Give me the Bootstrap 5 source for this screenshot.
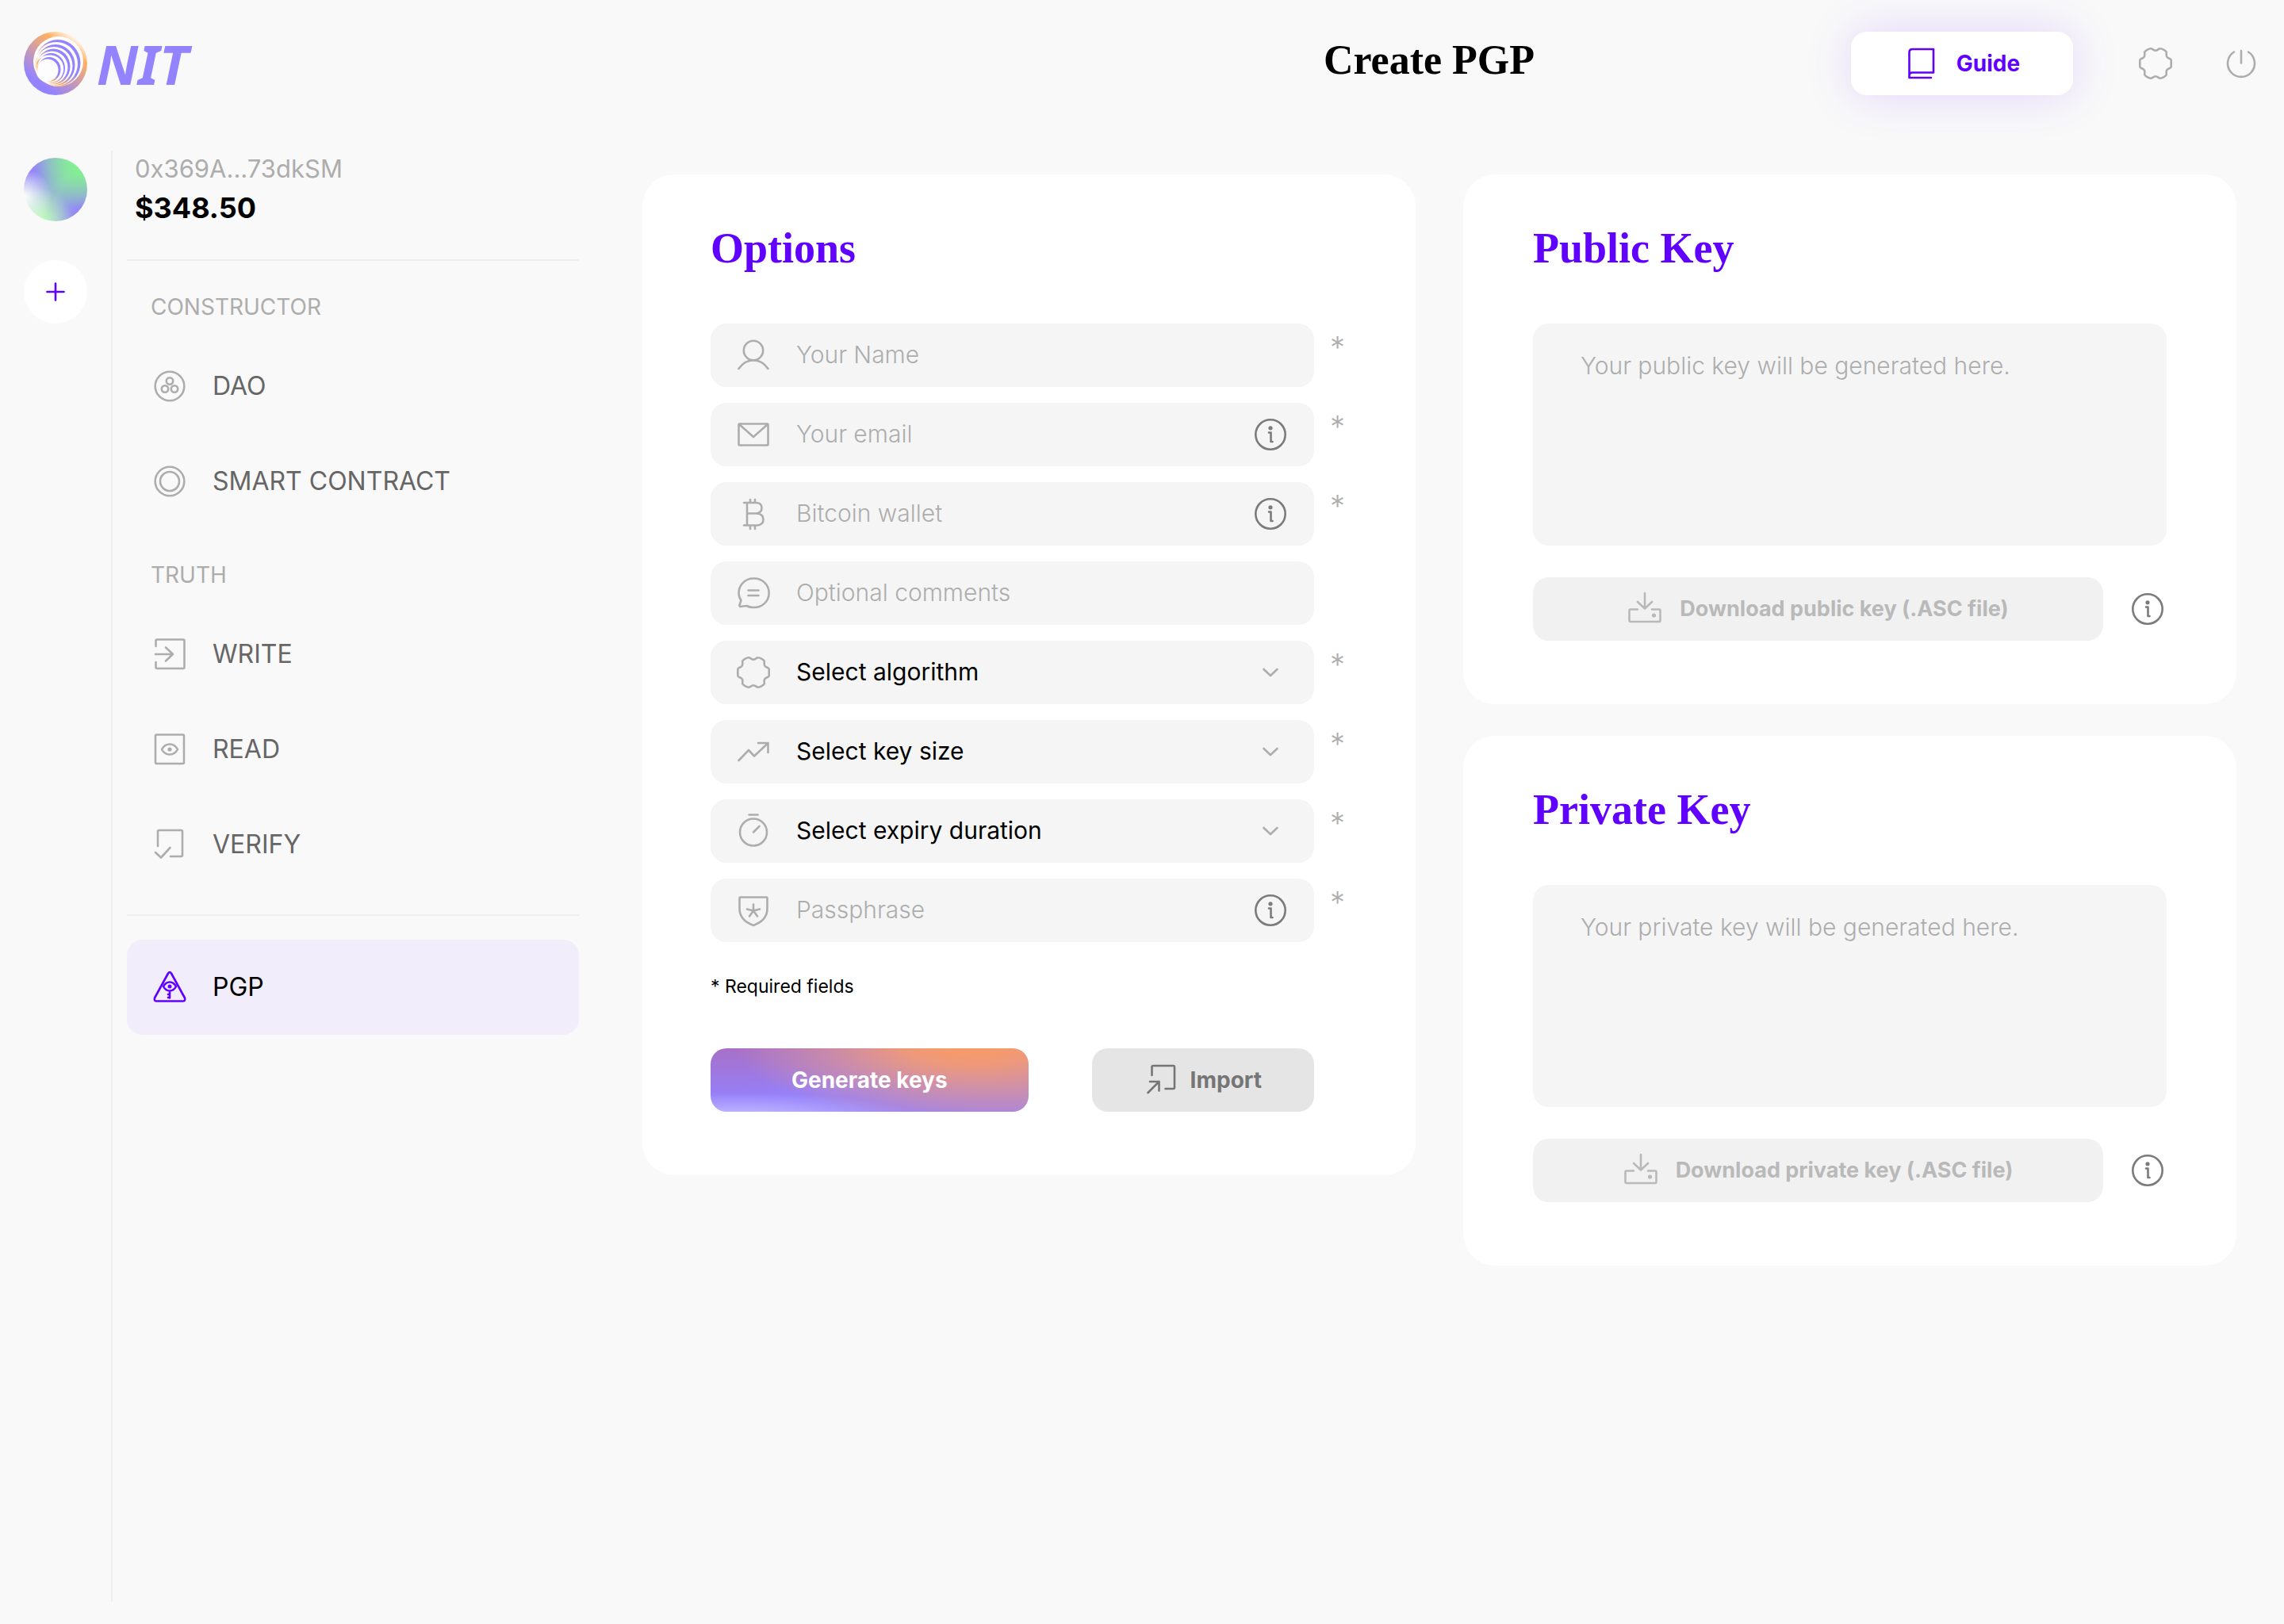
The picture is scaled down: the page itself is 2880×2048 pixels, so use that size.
<!DOCTYPE html>
<html lang="en">
<head>
<meta charset="utf-8">
<meta name="viewport" content="width=device-width, initial-scale=1">
<title>NIT – Create PGP</title>
<link href="https://cdn.jsdelivr.net/npm/bootstrap@5.3.0/dist/css/bootstrap.min.css" rel="stylesheet">
<style>
:root{--violet:#6000ff;--grey:#adadad;--mid:#7b7b7b;--line:#eeeeee;--field:#f5f5f5}
body{background:#f9f9f9;color:#000;font-family:Inter,"Liberation Sans",sans-serif;font-size:30px;line-height:40px}
button{border:0;font-weight:700}
.ico{width:44px;height:44px;flex:none;fill:none;stroke:currentColor;stroke-width:2.6;stroke-linecap:round;stroke-linejoin:round;display:block}
.serif{font-family:"Liberation Serif",serif;font-weight:700;line-height:60px}
/* top bar */
.topbar{padding:40px 32px 70px 30px}
.brand{flex:0 0 44%;gap:12px;color:#9483ff;text-decoration:none}
.brand-name{font:italic 700 69px/76px "Noto Sans","Open Sans",sans-serif}
.page-title{font-size:52px;margin:0;padding-bottom:8px}
.tools{gap:64px;color:var(--grey)}
.guide{width:280px;height:80px;gap:22px;margin-right:18px;border-radius:20px;background:#fff;color:var(--violet);font-size:28px;box-shadow:0 0 60px rgba(96,0,255,.15)}
.tool{background:none;padding:0;color:inherit}
/* account rail */
.rail{width:142px;flex:none;margin-bottom:28px;padding:9px 0 0 30px;border-right:2px solid var(--line);gap:49px}
.avatar{width:80px;height:80px;border-radius:50%;background:
 radial-gradient(circle at 0% 62%,#fff 0,rgba(255,255,255,0) 38%),
 radial-gradient(circle at 26% 100%,#c4ffbb 0,rgba(170,240,170,0) 42%),
 radial-gradient(circle at 88% 12%,#80f58a 0,rgba(128,240,140,0) 55%),
 radial-gradient(circle at 92% 88%,#937dff 0,rgba(147,131,255,0) 48%),
 radial-gradient(circle at 8% 22%,#937dff 0,rgba(147,131,255,0) 50%),#97c4cc}
.add{width:80px;height:80px;border-radius:50%;background:#fff;color:var(--violet);padding:0}
/* navigation */
.side{width:588px;flex:none;padding-left:18px}
.account{padding:1px 10px 38px;border-bottom:2px solid var(--line)}
.addr{font-size:31px;line-height:44px;color:var(--grey)}
.balance{font-size:36px;line-height:54px;font-weight:700}
.group-name{font-size:28px;color:var(--grey);padding:38px 30px 20px;margin:0;font-weight:400;line-height:40px}
.side-link{height:120px;padding-left:32px;gap:32px;border-radius:20px;font-size:32px;color:#666;text-decoration:none}
.side-link .ico{color:var(--grey)}
.side-link.active{background:#f1edfa;color:#000}
.side-link.active .ico{color:var(--violet)}
.pgp{margin-top:28px;padding-top:30px;border-top:2px solid var(--line)}
/* cards */
.work{padding:30px 60px 60px 80px}
.work .row{--bs-gutter-x:60px}
.keys{gap:40px}
.panel{background:#fff;border-radius:40px;padding:63px 88px 80px}
.panel-opt{padding:63px 66px 80px 86px}
.panel h2{font-size:54px;color:var(--violet);margin:0 0 65px}
.fields{gap:20px}
.entry{flex:1 1 0;min-width:0;height:80px;background:var(--field);border-radius:20px;padding:0 33px 0 32px;gap:32px;color:var(--grey)}
.entry input,.entry select,.keybox{border:0;background:transparent;outline:0;padding:0;color:#000;font-weight:300;appearance:none}
.entry input,.entry select{flex:1 1 0;min-width:0;height:80px;padding-bottom:2px}
.entry select{font-weight:400}
::placeholder{color:var(--grey);opacity:1}
.info{background:none;padding:0;color:var(--mid);font-weight:400}
.star{width:62px;flex:none;padding:10px 0 0 20px;font-size:38px;font-weight:300;color:var(--grey)}
.note{font-size:23px;line-height:32px;margin:40px 0 62px}
.actions{gap:80px;padding-right:62px}
.act{height:80px;border-radius:20px;font-size:28px;padding:0}
.generate{flex:400 1 0;color:#fff;background:
 radial-gradient(ellipse 75% 130% at 82% -12%,#fd9c5b 0,rgba(246,155,110,.9) 30%,rgba(220,140,160,0) 100%),
 radial-gradient(ellipse 60% 42% at 8% 112%,#c9c3ff 0,rgba(180,170,255,0) 100%),
 radial-gradient(ellipse 60% 85% at 5% -5%,#a86fc4 0,rgba(160,115,215,0) 100%),
 linear-gradient(90deg,#9580fb 50%,#a584e6)}
.import{flex:280 1 0;gap:14px;background:#e5e5e5;color:#757575}
.keybox{display:block;width:100%;height:280px;background:var(--field);border-radius:20px;padding:33px 60px;resize:none;margin-bottom:40px}
.download{flex:1 1 0;gap:22px;background:#f1f1f1;color:#b9b9b9;font-size:27px}
.dl-row{gap:34px;padding-right:2px}
</style>
</head>
<body class="min-vh-100 d-flex flex-column">
<svg width="0" height="0" class="position-absolute" aria-hidden="true">
 <defs>
  <linearGradient id="ringTop" x1=".1" y1=".9" x2=".72" y2=".04"><stop offset=".15" stop-color="#9483ff"/><stop offset=".8" stop-color="#ffb061"/><stop offset="1" stop-color="#fff3e6"/></linearGradient>
  <linearGradient id="arc" x1=".9" y1=".2" x2=".15" y2=".8"><stop offset=".35" stop-color="#9483ff"/><stop offset=".75" stop-color="#ffb061"/><stop offset="1" stop-color="#fff"/></linearGradient>
  <symbol id="i-gear" viewBox="-22 -22 44 44"><path d="M0-16.2C2.5-16.2 4-18.8 6-18.8S13.5-16 13.8-14C14-11 12.600-9.500 15-7.500C17-6 19.700-6 19.700-4V4C19.700 6 17 6 15 7.500C12.600 9.500 14 11 13.800 14C13.500 16 8 18.800 6 18.800S2.500 16.200 0 16.200S-4 18.800-6 18.800S-13.500 16-13.800 14C-14 11-12.600 9.500-15 7.500C-17 6-19.700 6-19.700 4V-4C-19.700-6-17-6-15-7.500C-12.600-9.500-14-11-13.800-14C-13.500-16-8-18.800-6-18.800S-2.500-16.200 0-16.200Z"/></symbol>
  <symbol id="i-power" viewBox="0 0 44 44"><path d="M22 6V21.500M13 7.500A17 17 0 1 0 31 7.500"/></symbol>
  <symbol id="i-book" viewBox="0 0 44 44"><path d="M6.500 40V8Q6.500 4 10.500 4H37V33.500H10.500Q6.500 33.500 6.500 37.500V40H34"/></symbol>
  <symbol id="i-plus" viewBox="0 0 44 44"><path d="M22 11.500V32.500M11.500 22H32.500"/></symbol>
  <symbol id="i-dao" viewBox="0 0 44 44"><circle cx="22" cy="22" r="18.300"/><circle cx="22" cy="15.500" r="4.200"/><circle cx="16" cy="25.500" r="4.200"/><circle cx="28" cy="25.500" r="4.200"/></symbol>
  <symbol id="i-contract" viewBox="0 0 44 44"><circle cx="22" cy="22" r="18.300"/><circle cx="22" cy="22" r="12"/></symbol>
  <symbol id="i-write" viewBox="0 0 44 44"><path d="M4.500 12V5Q4.500 3.500 6 3.500H39Q40.500 3.500 40.500 5V38.500Q40.500 40 39 40H6Q4.500 40 4.500 38.500V32M4 22H26M17 13.500L26 22L17 30.500"/></symbol>
  <symbol id="i-read" viewBox="0 0 44 44"><rect x="4" y="3.500" width="36" height="36.500" rx="1.500"/><path d="M12 22Q15.500 15.500 22 15.500T32 22Q28.500 28.500 22 28.500T12 22Z"/><circle cx="22" cy="22" r="1.300"/></symbol>
  <symbol id="i-verify" viewBox="0 0 44 44"><path d="M7 24V5.500Q7 4 8.500 4H36.500Q38 4 38 5.500V35.500Q38 37 36.500 37H23M4 32L11 38.500L22.500 26"/></symbol>
  <symbol id="i-pgp" viewBox="0 0 44 44"><path d="M20 4.500Q22 1.500 24 4.500L41 35.500Q42 39.500 39 39.500H5Q2 39.500 3 35.500Z"/><path d="M14 21Q17 15.500 22 15.500T30 21Q27 26.500 22 26.500T14 21ZM22 27V35.500M22 31H20M22 35H20"/><circle cx="22" cy="21" r="1.200"/></symbol>
  <symbol id="i-user" viewBox="0 0 44 44"><circle cx="22" cy="16" r="12.200"/><path d="M3.500 39Q11 28.300 22 28.300T40.500 39"/></symbol>
  <symbol id="i-mail" viewBox="0 0 44 44"><rect x="3.500" y="8.500" width="37" height="27" rx="1.200"/><path d="M4 9L22 25L40 9"/></symbol>
  <symbol id="i-btc" viewBox="0 0 44 44"><path d="M10 8H26Q32.500 8.500 32.500 14.500T26 21.500H14M26 21.500Q34.500 22 34.500 29T26.500 36.500H10M14 8V36.500M18 4V8M24 4V8M18 36.500V41M24 36.500V41"/></symbol>
  <symbol id="i-comment" viewBox="0 0 44 44"><path d="M22 3.500A18.300 18.300 0 1 1 22 40Q17 40 13.500 38Q9 38.500 5.500 39Q4 38.500 4.500 37L6.500 31Q3.500 27 3.500 22A18.300 18.300 0 0 1 22 3.500ZM15.500 18.500H28.500M15.500 25H28.500"/></symbol>
  <symbol id="i-trend" viewBox="0 0 44 44"><path d="M3.500 33L16 20L23 27.500L40 11.500M28 11H40.500V23"/></symbol>
  <symbol id="i-timer" viewBox="0 0 44 44"><circle cx="22" cy="23.500" r="17"/><path d="M16.500 1.500H27.500M22 23.500L29.500 16"/></symbol>
  <symbol id="i-shield" viewBox="0 0 44 44"><path d="M5.500 5.500H38.500Q39.500 5.500 39.500 6.500V20Q39.500 34.500 22 41Q4.500 34.500 4.500 20V6.500Q4.500 5.500 5.500 5.500ZM22 14.500V22.500M14 20.500L22 22.500L30 20.500M17 29.500L22 22.500L27 29.500"/></symbol>
  <symbol id="i-info" viewBox="0 0 44 44"><circle cx="22" cy="22" r="18.700"/><path d="M20 19.500H22.500V31H24.500"/><circle cx="22" cy="13.800" r="1.300" fill="currentColor"/></symbol>
  <symbol id="i-chev" viewBox="0 0 44 44"><path d="M13.500 18L22 26L30.500 18"/></symbol>
  <symbol id="i-import" viewBox="0 0 44 44"><path d="M9.500 16V5.500Q9.500 4 11 4H36.500Q38 4 38 5.500V31.500Q38 33 36.500 33H26.500M4.500 38L18.500 24M7 24H18.500V35.500"/></symbol>
  <symbol id="i-download" viewBox="0 0 44 44"><path d="M22 2V21.500M13 13L22 21.500L31 13M13 22.500H4Q2.500 22.500 2.500 24V36.500Q2.500 38 4 38H40Q41.500 38 41.500 36.500V24Q41.500 22.500 40 22.500H31"/><circle cx="33.500" cy="30" r="1.300" fill="currentColor"/></symbol>
 </defs>
</svg>

<header class="topbar d-flex align-items-center">
 <a href="#" class="brand d-flex align-items-center">
  <svg width="80" height="80" viewBox="0 0 80 80" fill="none" aria-hidden="true">
   <circle cx="40" cy="40" r="40" fill="url(#ringTop)"/>
   <circle cx="43.500" cy="37.500" r="31.500" fill="#fdfdfd"/>
   <path fill="url(#arc)" fill-rule="evenodd" d="M43 10A28.500 29.500 0 1 1 43 69A28.500 29.500 0 1 1 43 10ZM41 13A27 27.500 0 1 0 41 68A27 27.500 0 1 0 41 13Z"/>
   <path fill="url(#arc)" fill-rule="evenodd" d="M40 16A24.500 26 0 1 1 40 68A24.500 26 0 1 1 40 16ZM38 19A23.500 24 0 1 0 38 67A23.500 24 0 1 0 38 19Z"/>
   <path fill="url(#arc)" fill-rule="evenodd" d="M37.500 21.500A21 22.500 0 1 1 37.500 66.500A21 22.500 0 1 1 37.500 21.500ZM35.500 24.500A20 20.500 0 1 0 35.500 65.500A20 20.500 0 1 0 35.500 24.500Z"/>
   <path fill="url(#arc)" fill-rule="evenodd" d="M34.500 27A17.500 19 0 1 1 34.500 65A17.500 19 0 1 1 34.500 27ZM32.500 29.500A16.500 17.300 0 1 0 32.500 64A16.500 17.300 0 1 0 32.500 29.500Z"/>
   <path fill="url(#arc)" fill-rule="evenodd" d="M32 32A14.500 15.500 0 1 1 32 63A14.500 15.500 0 1 1 32 32ZM30 34.500A13.500 14 0 1 0 30 62.500A13.500 14 0 1 0 30 34.500Z"/>
  </svg>
  <span class="brand-name">NIT</span>
 </a>
 <h1 class="page-title serif flex-grow-1 text-center">Create PGP</h1>
 <div class="tools d-flex align-items-center">
  <button type="button" class="guide d-flex align-items-center justify-content-center"><svg class="ico"><use href="#i-book"/></svg>Guide</button>
  <button type="button" class="tool" aria-label="Settings"><svg class="ico"><use href="#i-gear"/></svg></button>
  <button type="button" class="tool" aria-label="Log out"><svg class="ico"><use href="#i-power"/></svg></button>
 </div>
</header>

<div class="d-flex flex-grow-1">
 <div class="rail d-flex flex-column">
  <div class="avatar"></div>
  <button type="button" class="add d-flex align-items-center justify-content-center" aria-label="Add account"><svg class="ico"><use href="#i-plus"/></svg></button>
 </div>
 <nav class="side">
  <div class="account"><div class="addr">0x369A...73dkSM</div><div class="balance">$348.50</div></div>
  <h6 class="group-name">CONSTRUCTOR</h6>
  <a href="#" class="side-link d-flex align-items-center"><svg class="ico"><use href="#i-dao"/></svg>DAO</a>
  <a href="#" class="side-link d-flex align-items-center"><svg class="ico"><use href="#i-contract"/></svg>SMART CONTRACT</a>
  <h6 class="group-name">TRUTH</h6>
  <a href="#" class="side-link d-flex align-items-center"><svg class="ico"><use href="#i-write"/></svg>WRITE</a>
  <a href="#" class="side-link d-flex align-items-center"><svg class="ico"><use href="#i-read"/></svg>READ</a>
  <a href="#" class="side-link d-flex align-items-center"><svg class="ico"><use href="#i-verify"/></svg>VERIFY</a>
  <div class="pgp"><a href="#" class="side-link active d-flex align-items-center" aria-current="page"><svg class="ico"><use href="#i-pgp"/></svg>PGP</a></div>
 </nav>

 <main class="work flex-grow-1">
  <div class="row align-items-start">
  <div class="col-6">
  <form class="panel panel-opt">
   <h2 class="serif">Options</h2>
   <div class="fields d-flex flex-column">
    <div class="d-flex"><div class="entry d-flex align-items-center"><label for="name" aria-label="Your Name"><svg class="ico"><use href="#i-user"/></svg></label><input id="name" type="text" placeholder="Your Name"></div><span class="star">*</span></div>
    <div class="d-flex"><div class="entry d-flex align-items-center"><label for="email" aria-label="Your email"><svg class="ico"><use href="#i-mail"/></svg></label><input id="email" type="email" placeholder="Your email"><button type="button" class="info" aria-label="About email"><svg class="ico"><use href="#i-info"/></svg></button></div><span class="star">*</span></div>
    <div class="d-flex"><div class="entry d-flex align-items-center"><label for="wallet" aria-label="Bitcoin wallet"><svg class="ico"><use href="#i-btc"/></svg></label><input id="wallet" type="text" placeholder="Bitcoin wallet"><button type="button" class="info" aria-label="About wallet"><svg class="ico"><use href="#i-info"/></svg></button></div><span class="star">*</span></div>
    <div class="d-flex"><div class="entry d-flex align-items-center"><label for="comments" aria-label="Optional comments"><svg class="ico"><use href="#i-comment"/></svg></label><input id="comments" type="text" placeholder="Optional comments"></div><span class="star"></span></div>
    <div class="d-flex"><div class="entry d-flex align-items-center"><label for="algo" aria-label="Algorithm"><svg class="ico"><use href="#i-gear"/></svg></label><select id="algo"><option>Select algorithm</option></select><svg class="ico"><use href="#i-chev"/></svg></div><span class="star">*</span></div>
    <div class="d-flex"><div class="entry d-flex align-items-center"><label for="size" aria-label="Key size"><svg class="ico"><use href="#i-trend"/></svg></label><select id="size"><option>Select key size</option></select><svg class="ico"><use href="#i-chev"/></svg></div><span class="star">*</span></div>
    <div class="d-flex"><div class="entry d-flex align-items-center"><label for="expiry" aria-label="Expiry duration"><svg class="ico"><use href="#i-timer"/></svg></label><select id="expiry"><option>Select expiry duration</option></select><svg class="ico"><use href="#i-chev"/></svg></div><span class="star">*</span></div>
    <div class="d-flex"><div class="entry d-flex align-items-center"><label for="pass" aria-label="Passphrase"><svg class="ico"><use href="#i-shield"/></svg></label><input id="pass" type="password" placeholder="Passphrase"><button type="button" class="info" aria-label="About passphrase"><svg class="ico"><use href="#i-info"/></svg></button></div><span class="star">*</span></div>
   </div>
   <p class="note">* Required fields</p>
   <div class="actions d-flex">
    <button type="submit" class="act generate">Generate keys</button>
    <button type="button" class="act import d-flex align-items-center justify-content-center"><svg class="ico"><use href="#i-import"/></svg>Import</button>
   </div>
  </form>
  </div>

  <div class="col-6 keys d-flex flex-column">
   <section class="panel">
    <h2 class="serif"><label for="pub">Public Key</label></h2>
    <textarea id="pub" class="keybox" readonly placeholder="Your public key will be generated here."></textarea>
    <div class="dl-row d-flex align-items-center">
     <button type="button" class="act download d-flex align-items-center justify-content-center" disabled><svg class="ico"><use href="#i-download"/></svg>Download public key (.ASC file)</button>
     <button type="button" class="info" aria-label="About public key"><svg class="ico"><use href="#i-info"/></svg></button>
    </div>
   </section>
   <section class="panel">
    <h2 class="serif"><label for="priv">Private Key</label></h2>
    <textarea id="priv" class="keybox" readonly placeholder="Your private key will be generated here."></textarea>
    <div class="dl-row d-flex align-items-center">
     <button type="button" class="act download d-flex align-items-center justify-content-center" disabled><svg class="ico"><use href="#i-download"/></svg>Download private key (.ASC file)</button>
     <button type="button" class="info" aria-label="About private key"><svg class="ico"><use href="#i-info"/></svg></button>
    </div>
   </section>
  </div>
  </div>
 </main>
</div>
<script src="https://cdn.jsdelivr.net/npm/bootstrap@5.3.0/dist/js/bootstrap.bundle.min.js"></script>
</body>
</html>
